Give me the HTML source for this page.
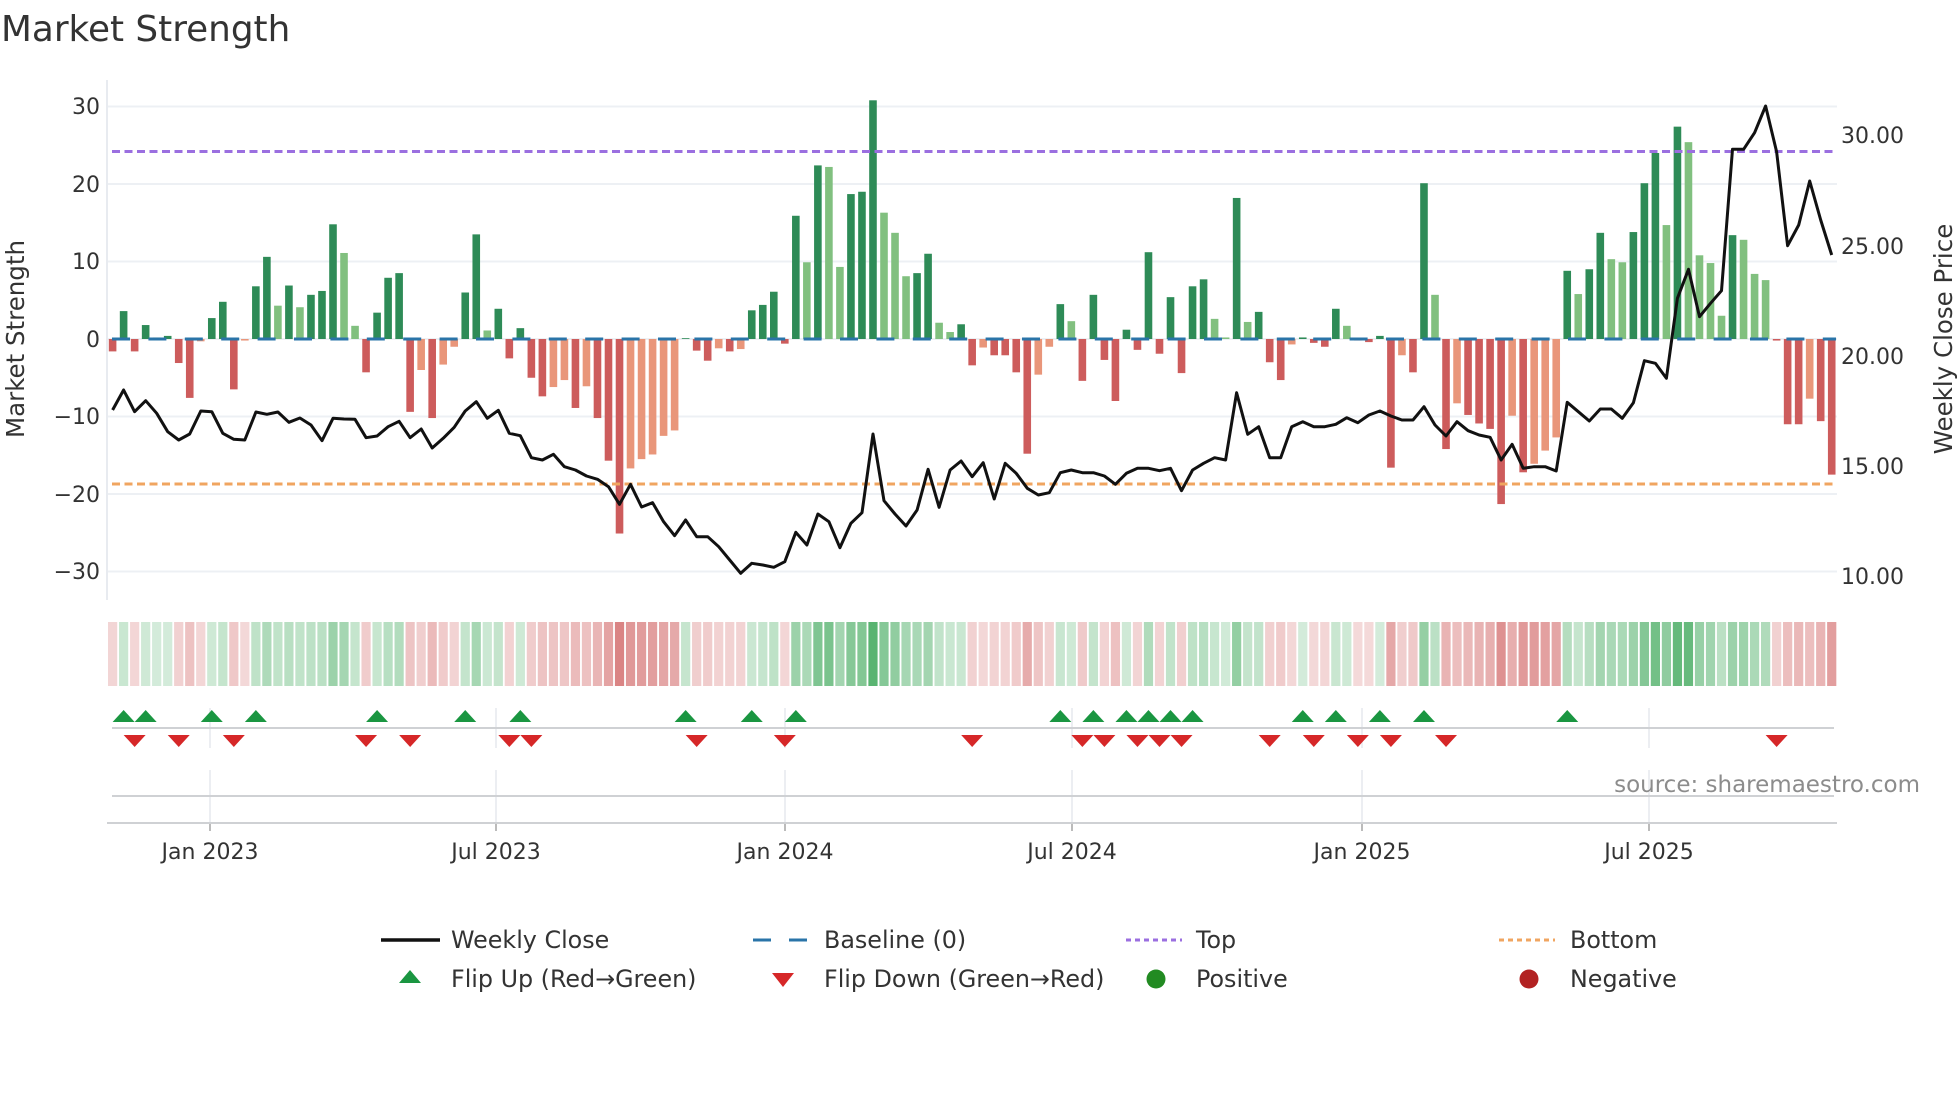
<!DOCTYPE html>
<html><head><meta charset="utf-8">
<style>
html,body{margin:0;padding:0;background:#fff;}
body{width:1960px;height:1102px;overflow:hidden;}
svg{display:block;font-family:"DejaVu Sans","Liberation Sans",sans-serif;}
</style></head>
<body>
<svg id="c" width="1960" height="1102" viewBox="0 0 1960 1102" xmlns="http://www.w3.org/2000/svg">
<rect width="1960" height="1102" fill="#fff"/>
<text x="1" y="41" font-size="35.8" fill="#333">Market Strength</text>
<g id="grid"></g>
<line x1="107" y1="80" x2="107" y2="600" stroke="#e8ebf0" stroke-width="2"/>
<g font-size="22" fill="#333" text-anchor="end">
<text x="100" y="114">30</text><text x="100" y="192">20</text><text x="100" y="269">10</text>
<text x="100" y="347">0</text><text x="100" y="424">−10</text><text x="100" y="502">−20</text><text x="100" y="579">−30</text>
</g>
<g font-size="22" fill="#333">
<text x="1841" y="143">30.00</text><text x="1841" y="254">25.00</text><text x="1841" y="364">20.00</text>
<text x="1841" y="474">15.00</text><text x="1841" y="584">10.00</text>
</g>
<text transform="translate(24,339) rotate(-90)" font-size="24.5" fill="#333" text-anchor="middle">Market Strength</text>
<text transform="translate(1952,339) rotate(-90)" font-size="24.5" fill="#333" text-anchor="middle">Weekly Close Price</text>
<g id="bars"></g>
<line x1="112" y1="339" x2="1836" y2="339" stroke="#2a74a8" stroke-width="3" stroke-dasharray="18 18.4"/>
<line x1="112" y1="151.5" x2="1836" y2="151.5" stroke="#9b6fe0" stroke-width="3" stroke-dasharray="8 4.5"/>
<line x1="112" y1="484" x2="1836" y2="484" stroke="#f0a560" stroke-width="3" stroke-dasharray="8 4.5"/>
<polyline id="price" fill="none" stroke="#111" stroke-width="3" stroke-linejoin="round"/>
<g id="strip"></g>
<g id="vg" stroke="#e6e9ee" stroke-width="1.5"></g>
<line x1="112" y1="728" x2="1834" y2="728" stroke="#cfd1d4" stroke-width="2"/>
<line x1="112" y1="796" x2="1834" y2="796" stroke="#cfd1d4" stroke-width="2"/>
<line x1="107" y1="823" x2="1837" y2="823" stroke="#cfd1d4" stroke-width="2"/>
<g id="marks"></g>
<text x="1920" y="792" font-size="23" fill="#8c8c8c" text-anchor="end">source: sharemaestro.com</text>
<g font-size="22" fill="#333" text-anchor="middle">
<text x="210" y="859">Jan 2023</text><text x="496" y="859">Jul 2023</text><text x="785" y="859">Jan 2024</text>
<text x="1072" y="859">Jul 2024</text><text x="1362" y="859">Jan 2025</text><text x="1649" y="859">Jul 2025</text>
</g>
<g font-size="23.8" fill="#333">
<line x1="381" y1="940" x2="440" y2="940" stroke="#111" stroke-width="3.5"/>
<text x="451" y="948">Weekly Close</text>
<line x1="753" y1="940" x2="807" y2="940" stroke="#2a74a8" stroke-width="3" stroke-dasharray="18 18"/>
<text x="824" y="948">Baseline (0)</text>
<line x1="1126" y1="940" x2="1182" y2="940" stroke="#9b6fe0" stroke-width="3" stroke-dasharray="5 4"/>
<text x="1196" y="948">Top</text>
<line x1="1499" y1="940" x2="1555" y2="940" stroke="#f0a560" stroke-width="3" stroke-dasharray="5 4"/>
<text x="1570" y="948">Bottom</text>
<polygon points="410,970 421,983 399,983" fill="#1a9641"/>
<text x="451" y="987">Flip Up (Red→Green)</text>
<polygon points="772,973 794,973 783,987" fill="#d62728"/>
<text x="824" y="987">Flip Down (Green→Red)</text>
<circle cx="1156" cy="979" r="9.5" fill="#228b22"/>
<text x="1196" y="987">Positive</text>
<circle cx="1529" cy="979" r="9.5" fill="#b22222"/>
<text x="1570" y="987">Negative</text>
</g>
</svg>
<script>
(function(){
var NS="http://www.w3.org/2000/svg";
function el(t,a,p){var e=document.createElementNS(NS,t);for(var k in a)e.setAttribute(k,a[k]);p.appendChild(e);return e;}
var V=[-1.6,3.6,-1.6,1.8,0.2,0.4,-3.1,-7.6,-0.3,2.7,4.8,-6.5,-0.2,6.8,10.6,4.3,6.9,4.1,5.7,6.2,14.8,11.1,1.7,-4.3,3.4,7.9,8.5,-9.4,-4.0,-10.2,-3.3,-1.0,6.0,13.5,1.1,3.9,-2.5,1.4,-5.0,-7.4,-6.2,-5.3,-8.9,-6.1,-10.2,-15.7,-25.1,-16.7,-15.5,-14.9,-12.5,-11.8,0.1,-1.5,
-2.8,-1.2,-1.6,-1.3,3.7,4.4,6.1,-0.6,15.9,9.9,22.4,22.2,9.3,18.7,19.0,30.8,16.3,13.7,8.1,8.5,11.0,2.1,0.9,1.9,-3.4,-1.1,-2.1,-2.1,-4.3,-14.8,-4.6,-1.0,4.5,2.3,-5.4,5.7,-2.7,-8.0,1.2,-1.4,11.2,-1.9,5.4,-4.4,6.8,7.7,2.6,0.2,18.2,2.2,3.5,
-3.0,-5.3,-0.7,0.2,-0.5,-1.0,3.9,1.7,-0.2,-0.4,0.4,-16.6,-2.1,-4.3,20.1,5.7,-14.2,-8.3,-9.8,-10.9,-11.6,-21.3,-9.9,-17.2,-16.1,-14.4,-12.7,8.8,5.8,9.0,13.7,10.3,9.9,13.8,20.1,24.0,14.7,27.4,25.4,10.8,9.8,3.0,13.4,12.8,8.4,7.6,-0.2,-11.0,-11.0,-7.7,-10.6,-17.5];
var Z=[990,930,995,962,1000,1055,1080,1062,993,995,1060,1078,1080,996,1003,996,1027,1014,1035,1082,1015,1017,1018,1073,1068,1040,1024,1073,1047,1104,1075,1042,993,965,1015,991,1060,1067,1133,1140,1123,1160,1170,1188,1198,1220,1273,1213,1281,1268,1325,1367,1320,1370,
1370,1400,1440,1480,1450,1455,1462,1445,1357,1395,1302,1325,1403,1330,1298,1062,1262,1302,1338,1290,1168,1282,1170,1143,1190,1148,1257,1150,1180,1225,1245,1238,1178,1170,1178,1178,1188,1213,1180,1165,1165,1172,1165,1232,1170,1150,1133,1140,938,1063,1040,
1133,1133,1040,1025,1040,1040,1033,1013,1028,1005,993,1008,1020,1020,980,1035,1068,1025,1052,1065,1072,1140,1093,1165,1160,1160,1173,967,995,1023,987,987,1015,968,842,850,895,655,568,710,670,632,208,208,158,78,215,497,435,303,420,525];
var UP=[1,3,9,13,24,32,37,52,58,62,86,89,92,94,96,98,108,111,115,119,132];
var DN=[2,6,11,23,27,36,38,53,61,78,88,90,93,95,97,105,109,113,116,121,151];
function X(i){return 112.6+11.02*i;}
var g=document.getElementById('grid');
for(var v=-30;v<=30;v+=10){var y=339-7.75*v;el('line',{x1:107,y1:y,x2:1837,y2:y,stroke:'#edf0f4','stroke-width':2},g);}
var b=document.getElementById('bars'),s=document.getElementById('strip');
var ema=0;
for(var i=0;i<V.length;i++){
 var v=V[i],p=i?V[i-1]:0,pos=v>=0;
 var dark=Math.abs(v)>=Math.abs(p)||(p>=0)!=pos;
 var col=pos?(dark?'#2e8b57':'#81c07f'):(dark?'#cd5c5c':'#e9967a');
 var h=Math.max(Math.abs(v)*7.75,0.8);
 el('rect',{x:X(i)-3.8,y:pos?339-h:339,width:7.6,height:h,fill:col},b);
 ema=0.6*ema+0.4*v;
 var m=Math.min(1,(0.6*Math.abs(v)+0.4*Math.abs(ema))/28);
 var a=0.2+0.6*m;
 el('rect',{x:X(i)-4.6,y:622,width:9.2,height:64,fill:pos?'rgb(45,160,75)':'rgb(200,70,70)','fill-opacity':a},s);
}
var pts=[];for(var i=0;i<Z.length;i++)pts.push(X(i).toFixed(1)+','+(80+Z[i]/3).toFixed(1));
document.getElementById('price').setAttribute('points',pts.join(' '));
var mk=document.getElementById('marks');
UP.forEach(function(i){var x=X(i);el('polygon',{points:(x)+',710 '+(x+11)+',722 '+(x-11)+',722',fill:'#1a9641'},mk);});
DN.forEach(function(i){var x=X(i);el('polygon',{points:(x-11)+',735 '+(x+11)+',735 '+x+',747',fill:'#d62728'},mk);});
var vg=document.getElementById('vg');
[210,496,785,1072,1362,1649].forEach(function(x){
 el('line',{x1:x,y1:708,x2:x,y2:748},vg);
 el('line',{x1:x,y1:770,x2:x,y2:823},vg);
 el('line',{x1:x,y1:823,x2:x,y2:831,stroke:'#bbb','stroke-width':2},vg);
});
})();
</script>
</body></html>
